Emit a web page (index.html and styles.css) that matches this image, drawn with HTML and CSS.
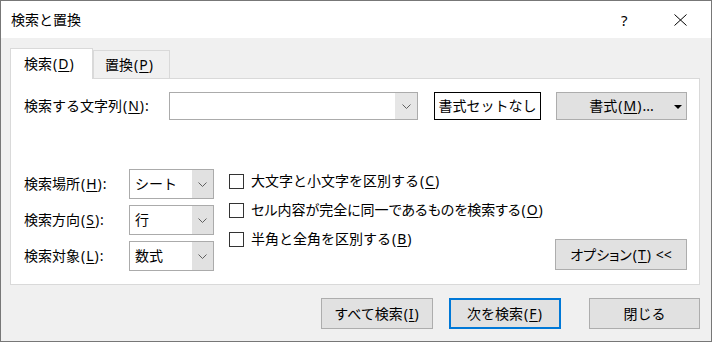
FILE: index.html
```html
<!DOCTYPE html>
<html lang="ja">
  <head>
    <meta charset="UTF-8" />
    <meta name="viewport" content="width=device-width, initial-scale=1.0" />
    <title>検索と置換</title>
    <link rel="stylesheet" href="styles.css">
  </head>
  <body>
    <div class="window">
      <!-- タイトルバー -->
      <div class="titlebar">
        <span class="title">検索と置換</span>
        <div class="title-buttons">
          <span class="help">?</span>
          <span class="close">
            <svg width="13" height="12" viewBox="0 0 13 12">
              <path d="M0.5 0.5 L12.5 11.5 M12.5 0.5 L0.5 11.5" stroke="#000" stroke-width="1" fill="none" />
            </svg>
          </span>
        </div>
      </div>

      <div class="main">
        <div class="tabs">
          <div class="tab active">検索<span class="key">(<u>D</u>)</span></div>
          <div class="tab">置換<span class="key">(<u>P</u>)</span></div>
        </div>

        <div class="panel">
          <div class="find-row">
            <span class="find-label">検索する文字列<span class="key">(<u>N</u>)</span>:</span>
            <div class="combo">
              <div class="combo-input"></div>
              <div class="combo-arrow">
                <svg width="9" height="5" viewBox="0 0 9 5"><polyline points="0.5,0.5 4.5,4.5 8.5,0.5" fill="none" stroke="#606060" stroke-width="1" /></svg>
              </div>
            </div>
            <button class="btn btn-preview">書式セットなし</button>
            <button class="btn btn-format">
              <span>書式<span class="key">(<u>M</u>)</span>...</span>
              <svg class="caret" width="8" height="4" viewBox="0 0 8 4"><polygon points="0,0 8,0 4,4" fill="#000" /></svg>
            </button>
          </div>

          <div class="options">
            <div class="fields">
              <div class="field">
                <span class="field-label">検索場所<span class="key">(<u>H</u>)</span>:</span>
                <div class="select">
                  <span class="select-value">シート</span>
                  <div class="select-arrow">
                    <svg width="9" height="5" viewBox="0 0 9 5"><polyline points="0.5,0.5 4.5,4.5 8.5,0.5" fill="none" stroke="#606060" stroke-width="1" /></svg>
                  </div>
                </div>
              </div>
              <div class="field">
                <span class="field-label">検索方向<span class="key">(<u>S</u>)</span>:</span>
                <div class="select">
                  <span class="select-value">行</span>
                  <div class="select-arrow">
                    <svg width="9" height="5" viewBox="0 0 9 5"><polyline points="0.5,0.5 4.5,4.5 8.5,0.5" fill="none" stroke="#606060" stroke-width="1" /></svg>
                  </div>
                </div>
              </div>
              <div class="field">
                <span class="field-label">検索対象<span class="key">(<u>L</u>)</span>:</span>
                <div class="select">
                  <span class="select-value">数式</span>
                  <div class="select-arrow">
                    <svg width="9" height="5" viewBox="0 0 9 5"><polyline points="0.5,0.5 4.5,4.5 8.5,0.5" fill="none" stroke="#606060" stroke-width="1" /></svg>
                  </div>
                </div>
              </div>
            </div>

            <div class="checks">
              <label class="check"><span class="box"></span>大文字と小文字を区別する<span class="key">(<u>C</u>)</span></label>
              <label class="check"><span class="box"></span><span class="tight">セル内容が完全に同一であるものを検索する</span><span class="key">(<u>O</u>)</span></label>
              <label class="check"><span class="box"></span>半角と全角を区別する<span class="key">(<u>B</u>)</span></label>
            </div>

            <button class="btn btn-options"><span class="tight">オプション</span><span class="key">(<u>T</u>)</span>&nbsp;&lt;&lt;</button>
          </div>
        </div>

        <div class="footer">
          <button class="btn btn-foot">すべて検索<span class="key">(<u>I</u>)</span></button>
          <button class="btn btn-foot btn-default">次を検索<span class="key">(<u>F</u>)</span></button>
          <button class="btn btn-foot btn-close">閉じる</button>
        </div>
      </div>
    </div>
  </body>
</html>
```

FILE: styles.css
```css
* {
  box-sizing: border-box;
  margin: 0;
  padding: 0;
}

body {
  font-family: "Noto Sans", "Noto Sans CJK JP", sans-serif;
  font-size: 14px;
  line-height: 20px;
  color: #000;
  background: #fff;
}

u {
  text-decoration: underline;
  text-underline-offset: 2px;
}

/* ニーモニック (X) はYu Gothic UIに合わせて少し広め */
.key {
  letter-spacing: 1px;
  padding-left: 1px;
}

.tight {
  font-feature-settings: "palt";
}

.window {
  width: 712px;
  height: 342px;
  border: 1px solid #777;
  background: #f0f0f0;
  display: flex;
  flex-direction: column;
}

/* タイトルバー */
.titlebar {
  height: 37px;
  background: #fff;
  display: flex;
  align-items: center;
  justify-content: space-between;
  padding-left: 10px;
}

.title {
  font-size: 14px;
}

.title-buttons {
  display: flex;
  align-items: center;
}

.help {
  font-size: 15px;
  width: 10px;
  margin-right: 43px;
}

.close {
  display: flex;
  width: 13px;
  margin-right: 24px;
}

.main {
  flex: 1;
  padding: 10px 11px 0 9px;
  display: flex;
  flex-direction: column;
}

/* タブ */
.tabs {
  display: flex;
  align-items: flex-end;
  height: 30px;
}

.tab {
  height: 28px;
  width: 77px;
  padding-left: 11px;
  border: 1px solid #d9d9d9;
  border-bottom: none;
  background: #f0f0f0;
  display: flex;
  align-items: center;
}

.tab.active {
  position: relative;
  z-index: 1;
  height: 31px;
  width: 83px;
  padding-left: 13px;
  margin-bottom: -1px;
  background: #fff;
}

.panel {
  background: #fff;
  border: 1px solid #d9d9d9;
  height: 207px;
  padding: 13px 12px 13px 13px;
  display: flex;
  flex-direction: column;
}

.find-row {
  display: flex;
  align-items: center;
  height: 28px;
}

.find-label {
  width: 145px;
}

.combo {
  width: 249px;
  height: 28px;
  border: 1px solid #ababab;
  display: flex;
}

.combo-input {
  flex: 1;
}

.combo-arrow {
  width: 22px;
  background: #e6e6e6;
  display: flex;
  align-items: center;
  justify-content: center;
}

.btn {
  font-family: inherit;
  font-size: 14px;
  line-height: 20px;
  color: #000;
  background: #e1e1e1;
  border: 1px solid #adadad;
  display: flex;
  align-items: center;
  justify-content: center;
}

.btn-preview {
  width: 107px;
  height: 28px;
  margin-left: 16px;
  background: #fff;
  border: 1px solid #000;
}

.btn-format {
  width: 131px;
  height: 28px;
  margin-left: 15px;
  position: relative;
}

.btn-format .caret {
  position: absolute;
  right: 4px;
  top: 12px;
}

.options {
  margin-top: 49px;
  display: flex;
  flex: 1;
}

.fields {
  display: flex;
  flex-direction: column;
  gap: 6px;
}

.field {
  display: flex;
  align-items: center;
  height: 30px;
}

.field-label {
  width: 105px;
}

.select {
  width: 85px;
  height: 30px;
  border: 1px solid #ababab;
  display: flex;
}

.select-value {
  flex: 1;
  padding-left: 5px;
  display: flex;
  align-items: center;
}

.select-arrow {
  width: 21px;
  background: #e1e1e1;
  display: flex;
  align-items: center;
  justify-content: center;
}

.checks {
  margin-left: 15px;
  padding-top: 2px;
  display: flex;
  flex-direction: column;
  gap: 9px;
}

.check {
  height: 20px;
  display: flex;
  align-items: center;
}

.box {
  width: 15px;
  height: 15px;
  border: 1px solid #333;
  background: #fff;
  margin-right: 7px;
}

.btn-options {
  margin-left: auto;
  align-self: flex-end;
  width: 132px;
  height: 31px;
  margin-bottom: 1px;
}

/* 下のボタン */
.footer {
  display: flex;
  justify-content: flex-end;
  padding-top: 13px;
}

.btn-foot {
  width: 112px;
  height: 31px;
}

.btn-default {
  margin-left: 16px;
  border: 2px solid #0078d7;
}

.btn-close {
  width: 111px;
  margin-left: 28px;
}
```
